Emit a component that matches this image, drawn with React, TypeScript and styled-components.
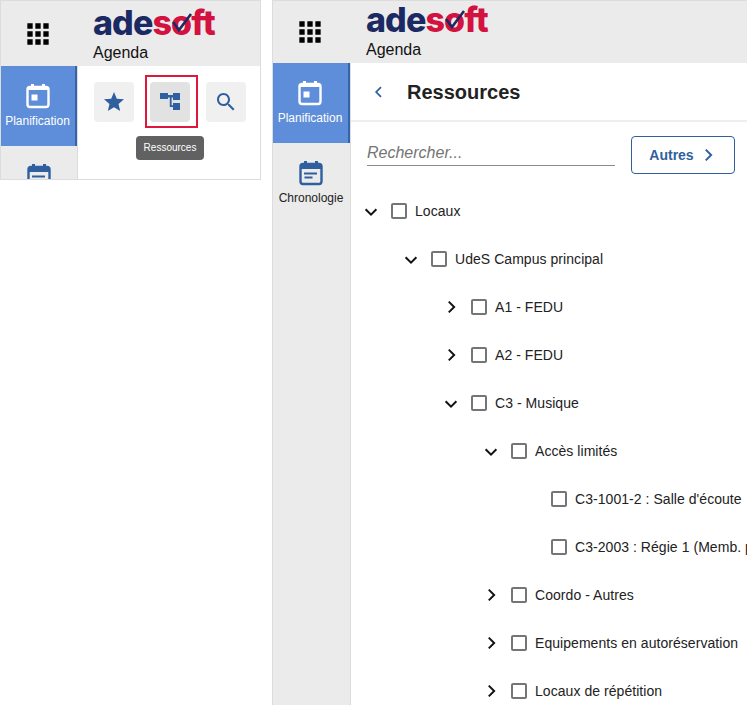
import React from 'react';
import styled, { createGlobalStyle } from 'styled-components';

const GlobalStyle = createGlobalStyle`
  html, body { margin: 0; padding: 0; background: #ffffff; }
  body { font-family: "Liberation Sans", Arial, sans-serif; color: #222222; }
`;

interface TreeNode {
  label: string;
  level: number;
  state?: 'open' | 'closed';
}

const nodes: TreeNode[] = [
  { label: 'Locaux', level: 0, state: 'open' },
  { label: 'UdeS Campus principal', level: 1, state: 'open' },
  { label: 'A1 - FEDU', level: 2, state: 'closed' },
  { label: 'A2 - FEDU', level: 2, state: 'closed' },
  { label: 'C3 - Musique', level: 2, state: 'open' },
  { label: 'Accès limités', level: 3, state: 'open' },
  { label: "C3-1001-2 : Salle d'écoute", level: 4 },
  { label: 'C3-2003 : Régie 1 (Memb. personnel)', level: 4 },
  { label: 'Coordo - Autres', level: 3, state: 'closed' },
  { label: 'Equipements en autoréservation', level: 3, state: 'closed' },
  { label: 'Locaux de répétition', level: 3, state: 'closed' },
];

const AppsIcon = () => (
  <svg width="32" height="32" viewBox="0 0 24 24" fill="#000000">
    <path d="M4 8h4V4H4v4zm6 12h4v-4h-4v4zm-6 0h4v-4H4v4zm0-6h4v-4H4v4zm6 0h4v-4h-4v4zm6-10v4h4V4h-4zm-6 4h4V4h-4v4zm6 6h4v-4h-4v4zm0 6h4v-4h-4v4z" />
  </svg>
);

const PlanIcon = () => (
  <svg width="28" height="28" viewBox="0 0 28 28">
    <path d="M7 2h3v4H7zM18 2h3v4h-3z" fill="#ffffff" />
    <rect x="3.5" y="5" width="21" height="20" rx="2.5" fill="none" stroke="#ffffff" strokeWidth="2.4" />
    <rect x="3.5" y="5" width="21" height="3" fill="#ffffff" />
    <rect x="7.5" y="12.5" width="6" height="6" fill="#ffffff" />
  </svg>
);

const ChronoIcon = () => (
  <svg width="28" height="28" viewBox="0 0 28 28">
    <path d="M7 2h3v4H7zM18 2h3v4h-3z" fill="#2f5f9e" />
    <rect x="3.5" y="5" width="21" height="20" rx="2.5" fill="none" stroke="#2f5f9e" strokeWidth="2.4" />
    <rect x="3.5" y="5" width="21" height="5" fill="#2f5f9e" />
    <path d="M7 13.5h13v2H7zM7.5 17.5h8v2h-8z" fill="#2f5f9e" />
  </svg>
);

const StarIcon = () => (
  <svg width="24" height="24" viewBox="0 0 24 24" fill="#2f5f9e">
    <path d="M12 17.27L18.18 21l-1.64-7.03L22 9.24l-7.19-.61L12 2 9.19 8.63 2 9.24l5.46 4.73L5.82 21z" />
  </svg>
);

const TreeIcon = () => (
  <svg width="24" height="24" viewBox="0 0 24 24" fill="#2f5f9e">
    <path d="M2 3h8v6H2zM15 3h7v7h-7zM15 13h7v7h-7z" />
    <path d="M9 5h7v2.5H9zM11.8 6h1.8v11h-1.8zM12 15.2h4v1.8h-4z" />
  </svg>
);

const SearchIcon = () => (
  <svg width="24" height="24" viewBox="0 0 24 24" fill="#2f5f9e">
    <path d="M15.5 14h-.79l-.28-.27C15.41 12.59 16 11.11 16 9.5 16 5.91 13.09 3 9.5 3S3 5.91 3 9.5 5.91 16 9.5 16c1.61 0 3.09-.59 4.23-1.57l.27.28v.79l5 4.99L20.49 19l-4.99-5zm-6 0C7.01 14 5 11.99 5 9.5S7.01 5 9.5 5 14 7.01 14 9.5 11.99 14 9.5 14z" />
  </svg>
);

const Chevron = ({ dir, color, size }: { dir: 'left' | 'right' | 'down'; color: string; size: number }) => {
  const d = dir === 'down' ? 'M4 8l6 6 6-6' : dir === 'right' ? 'M7.5 4l6 6-6 6' : 'M12.5 4l-6 6 6 6';
  return (
    <svg width={size} height={size} viewBox="0 0 20 20" fill="none" stroke={color} strokeWidth="2.2">
      <path d={d} />
    </svg>
  );
};

const Logo = () => (
  <LogoWrap>
    <LogoNavy>ade</LogoNavy>
    <LogoRed>soft</LogoRed>
    <LogoCheck width="110" height="30" viewBox="0 0 110 30" fill="none">
      <path d="M80 13l6 8L98 5" stroke="#1b2a63" strokeWidth="2.6" />
    </LogoCheck>
  </LogoWrap>
);

const Shell = ({ tall, children }: { tall?: boolean; children: React.ReactNode }) => (
  <Panel $tall={tall}>
    <TopBar $tall={tall}>
      <AppsCell>
        <AppsIcon />
      </AppsCell>
      <Brand $tall={tall}>
        <Logo />
        <AppName>Agenda</AppName>
      </Brand>
    </TopBar>
    <Body>
      <Rail $tall={tall}>
        <RailItem $active>
          <PlanIcon />
          <RailLabel $active>Planification</RailLabel>
        </RailItem>
        <RailItem>
          <ChronoIcon />
          <RailLabel>Chronologie</RailLabel>
        </RailItem>
      </Rail>
      {children}
    </Body>
  </Panel>
);

export default function App() {
  return (
    <Page>
      <GlobalStyle />
      <Shell>
        <Toolbar>
          <ToolButton>
            <StarIcon />
          </ToolButton>
          <ToolButton $selected>
            <TreeIcon />
            <Tooltip>Ressources</Tooltip>
          </ToolButton>
          <ToolButton>
            <SearchIcon />
          </ToolButton>
        </Toolbar>
      </Shell>
      <Shell tall>
        <Content>
          <TitleBar>
            <BackCell>
              <Chevron dir="left" color="#2f5f9e" size={16} />
            </BackCell>
            <Title>Ressources</Title>
          </TitleBar>
          <SearchRow>
            <SearchField>Rechercher...</SearchField>
            <OtherButton>
              Autres
              <Chevron dir="right" color="#2f5f9e" size={18} />
            </OtherButton>
          </SearchRow>
          <Tree>
            {nodes.map((node) => (
              <Row key={node.label} $level={node.level}>
                <Toggle>{node.state && <Chevron dir={node.state === 'open' ? 'down' : 'right'} color="#111111" size={18} />}</Toggle>
                <Box />
                <RowLabel>{node.label}</RowLabel>
              </Row>
            ))}
          </Tree>
        </Content>
      </Shell>
    </Page>
  );
}

const Page = styled.div`
  display: flex;
  align-items: flex-start;
  gap: 11px;
  width: 747px;
  height: 705px;
  overflow: hidden;
`;

const Panel = styled.div<{ $tall?: boolean }>`
  flex: none;
  display: flex;
  flex-direction: column;
  width: ${({ $tall }) => ($tall ? '475px' : '261px')};
  height: ${({ $tall }) => ($tall ? '705px' : '180px')};
  box-sizing: border-box;
  border: 1px solid #dcdcdc;
  border-right-width: ${({ $tall }) => ($tall ? 0 : 1)}px;
  border-bottom-width: ${({ $tall }) => ($tall ? 0 : 1)}px;
  overflow: hidden;
`;

const TopBar = styled.div<{ $tall?: boolean }>`
  flex: none;
  display: flex;
  height: ${({ $tall }) => ($tall ? '62px' : '65px')};
  background: #ebebeb;
`;

const AppsCell = styled.div`
  width: 73px;
  display: flex;
  align-items: center;
  justify-content: center;
`;

const Brand = styled.div<{ $tall?: boolean }>`
  padding-left: ${({ $tall }) => ($tall ? '20px' : '19px')};
  padding-top: ${({ $tall }) => ($tall ? '0' : '3px')};
  display: flex;
  flex-direction: column;
`;

const LogoWrap = styled.div`
  position: relative;
  display: flex;
  height: 40px;
  font-family: "Inter", "Liberation Sans", sans-serif;
  font-weight: 800;
  font-size: 34px;
  line-height: 38px;
  letter-spacing: -0.9px;
`;

const LogoNavy = styled.span`
  color: #1b2a63;
`;

const LogoRed = styled.span`
  color: #d3123f;
`;

const LogoCheck = styled.svg`
  position: absolute;
  left: 0;
  top: 5px;
`;

const AppName = styled.div`
  font-size: 16px;
  line-height: 18px;
  color: #111111;
`;

const Body = styled.div`
  flex: 1;
  min-height: 0;
  display: flex;
`;

const Rail = styled.div<{ $tall?: boolean }>`
  flex: none;
  width: ${({ $tall }) => ($tall ? '78px' : '77px')};
  box-sizing: border-box;
  background: #ebebeb;
  border-right: 1px solid #dcdcdc;
`;

const RailItem = styled.div<{ $active?: boolean }>`
  height: 80px;
  box-sizing: border-box;
  display: flex;
  flex-direction: column;
  align-items: center;
  padding: 16px 1px 0 0;
  gap: 4px;
  background: ${({ $active }) => ($active ? '#5e8ed9' : 'transparent')};
  border-right: ${({ $active }) => ($active ? '2px solid #3763a8' : 'none')};
`;

const RailLabel = styled.div<{ $active?: boolean }>`
  font-size: 12px;
  line-height: 14px;
  white-space: nowrap;
  color: ${({ $active }) => ($active ? '#ffffff' : '#222222')};
`;

const Toolbar = styled.div`
  display: flex;
  gap: 16px;
  padding: 16px;
`;

const ToolButton = styled.div<{ $selected?: boolean }>`
  position: relative;
  width: 40px;
  height: 40px;
  border-radius: 4px;
  display: flex;
  align-items: center;
  justify-content: center;
  background: ${({ $selected }) => ($selected ? '#e2e2e2' : '#f0f0f0')};

  &::after {
    content: "";
    display: ${({ $selected }) => ($selected ? 'block' : 'none')};
    position: absolute;
    left: -5px;
    top: -7px;
    width: 49px;
    height: 49px;
    border: 2px solid #e0173c;
  }
`;

const Tooltip = styled.div`
  position: absolute;
  left: -14px;
  top: 54px;
  width: 68px;
  height: 24px;
  border-radius: 4px;
  background: #616161;
  color: #ffffff;
  font-size: 10px;
  line-height: 24px;
  text-align: center;
`;

const Content = styled.div`
  flex: 1;
  min-width: 0;
  display: flex;
  flex-direction: column;
`;

const TitleBar = styled.div`
  flex: none;
  height: 57px;
  display: flex;
  align-items: center;
  border-bottom: 2px solid #eeeeee;
`;

const BackCell = styled.div`
  width: 56px;
  display: flex;
  justify-content: center;
  padding-top: 1px;
`;

const Title = styled.div`
  font-size: 20px;
  font-weight: 700;
  color: #222222;
  padding-top: 2px;
`;

const SearchRow = styled.div`
  flex: none;
  display: flex;
  align-items: flex-start;
  gap: 16px;
  padding: 14px 12px 0 16px;
`;

const SearchField = styled.div`
  flex: 1;
  height: 30px;
  box-sizing: border-box;
  border-bottom: 1px solid #8c8c8c;
  font-size: 16px;
  font-style: italic;
  line-height: 33px;
  color: #757575;
`;

const OtherButton = styled.div`
  flex: none;
  width: 104px;
  height: 38px;
  box-sizing: border-box;
  display: flex;
  align-items: center;
  justify-content: center;
  gap: 5px;
  border: 1px solid #2f5f9e;
  border-radius: 4px;
  font-size: 14px;
  font-weight: 700;
  color: #2f5f9e;
`;

const Tree = styled.div`
  flex: 1;
  min-height: 0;
  padding-top: 13px;
  overflow: hidden;
`;

const Row = styled.div<{ $level: number }>`
  height: 48px;
  display: flex;
  align-items: center;
  padding-left: ${({ $level }) => 10 + $level * 40}px;
  white-space: nowrap;
`;

const Toggle = styled.div`
  flex: none;
  width: 20px;
  display: flex;
  justify-content: center;
  margin-right: 10px;
`;

const Box = styled.div`
  flex: none;
  width: 16px;
  height: 16px;
  box-sizing: border-box;
  border: 2px solid #757575;
  border-radius: 2px;
  margin-right: 8px;
`;

const RowLabel = styled.div`
  font-size: 14px;
  letter-spacing: 0.05px;
  color: #222222;
`;
